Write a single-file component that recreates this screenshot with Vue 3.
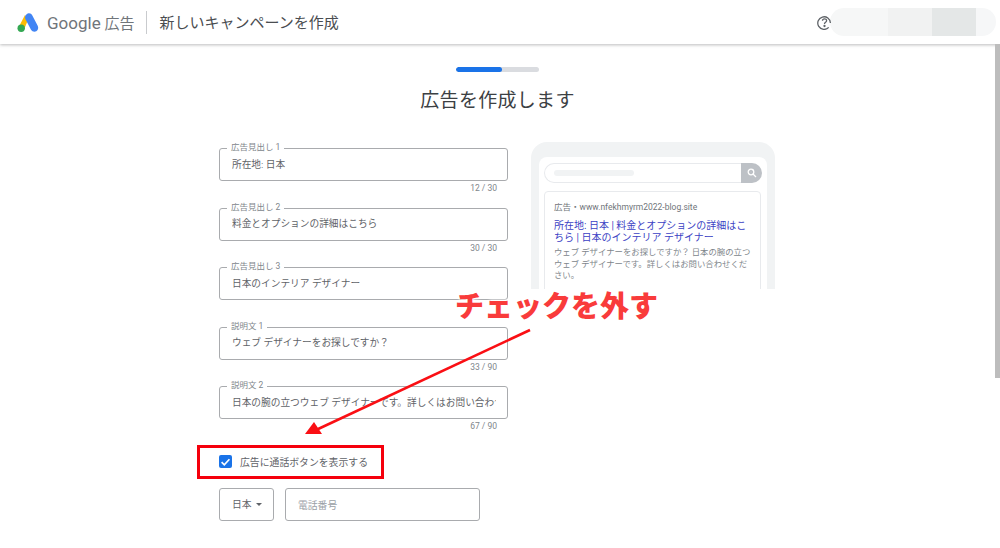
<script setup>
const fields = [
  { label: '広告見出し 1', value: '所在地: 日本', count: '12 / 30' },
  { label: '広告見出し 2', value: '料金とオプションの詳細はこちら', count: '30 / 30' },
  { label: '広告見出し 3', value: '日本のインテリア デザイナー', count: '' },
  { label: '説明文 1', value: 'ウェブ デザイナーをお探しですか？', count: '33 / 90' },
  { label: '説明文 2', value: '日本の腕の立つウェブ デザイナーです。詳しくはお問い合わせください。', count: '67 / 90' },
]
</script>

<template>
  <div class="page">
    <header class="header">
      <svg class="logo" width="22" height="21" viewBox="0 0 22 21">
        <path d="M8 3 L2.5 13.5 L7 17.5 L11 8 Z" fill="#fbbc04" />
        <path d="M11 1.5 C13 1 14.500 2 15.200 3.200 L20.700 13.800 C21.800 15.800 21 18.300 19.300 19.300 C17.500 20.300 15.100 19.700 14 17.800 L8.500 7.300 C7.400 5.100 8.600 2.200 11 1.500 Z" fill="#4285f4" />
        <circle cx="4.200" cy="16.200" r="3.700" fill="#34a853" />
      </svg>
      <span class="brand"><span class="google">Google</span> 広告</span>
      <span class="divider"></span>
      <span class="page-title">新しいキャンペーンを作成</span>
      <span class="spacer"></span>
      <svg class="help" width="15" height="15" viewBox="0 0 15 15" fill="none" stroke="#5f6368" stroke-width="1.300">
        <path d="M11.700 12.400 A6.300 6.300 0 1 1 13.400 8" />
        <path d="M5.500 5.800 C5.500 3.300 9.600 3.300 9.600 5.700 C9.600 7.300 7.500 7.300 7.500 9" />
        <circle cx="7.500" cy="11" r="0.500" fill="#5f6368" />
      </svg>
      <div class="account">
        <span class="seg seg-a"></span>
        <span class="seg seg-b"></span>
        <span class="seg seg-c"></span>
        <span class="seg seg-d"></span>
      </div>
    </header>

    <main class="main">
      <div class="progress"><div class="progress-fill"></div></div>
      <h1 class="title">広告を作成します</h1>

      <div class="columns">
        <div class="form">
          <div v-for="f in fields" :key="f.label" class="field-wrap">
            <div class="field">
              <span class="legend">{{ f.label }}</span>
              <span class="value">{{ f.value }}</span>
            </div>
            <div class="count">{{ f.count }}</div>
          </div>

          <label class="check-row">
            <span class="checkbox">
              <svg width="14" height="14" viewBox="0 0 14 14" fill="none" stroke="#fff" stroke-width="1.800">
                <path d="M2.800 7.200 L5.700 10 L11.200 4" />
              </svg>
            </span>
            <span class="check-label">広告に通話ボタンを表示する</span>
          </label>

          <div class="phone-row">
            <div class="select">日本<span class="caret"></span></div>
            <div class="phone-input">電話番号</div>
          </div>
        </div>

        <aside class="preview">
          <div class="screen">
            <div class="search">
              <span class="search-bar"><span class="search-placeholder"></span></span>
              <span class="search-btn">
                <svg width="10" height="10" viewBox="0 0 10 10" fill="none" stroke="#fff" stroke-width="1.300">
                  <circle cx="4" cy="4" r="2.800" />
                  <path d="M6 6 L9 9" />
                </svg>
              </span>
            </div>
            <div class="ad">
              <div class="ad-url">広告・www.nfekhmyrm2022-blog.site</div>
              <div class="ad-title">所在地: 日本 | 料金とオプションの詳細はこちら | 日本のインテリア デザイナー</div>
              <div class="ad-desc">ウェブ デザイナーをお探しですか？ 日本の腕の立つウェブ デザイナーです。詳しくはお問い合わせください。</div>
            </div>
          </div>
        </aside>
      </div>
    </main>

    <div class="scrollbar"></div>

    <div class="note">チェックを外す</div>
    <svg class="arrow" width="240" height="120" viewBox="0 0 240 120">
      <path d="M228 3 L14 103" stroke="#fa0f14" stroke-width="2.600" fill="none" />
      <path d="M3 107 L12 95 L20 107 Z" fill="#fa0f14" />
    </svg>
    <div class="highlight"></div>
  </div>
</template>

<style>
html, body { margin: 0; background: #fff; }
</style>

<style scoped>
.page {
  position: relative;
  width: 1000px;
  height: 548px;
  overflow: hidden;
  background: #fff;
  font-family: Roboto, "Noto Sans CJK JP", sans-serif;
  color: #5f6368;
}
.header {
  height: 44px;
  box-sizing: border-box;
  display: flex;
  align-items: center;
  padding: 0 4px 0 17px;
  background: #fff;
  box-shadow: 0 1px 3px rgba(60, 64, 67, 0.35);
}
.logo { flex: none; margin-right: 8px; }
.brand { font-size: 15px; color: #70757a; white-space: nowrap; }
.google { font-size: 17px; font-weight: 400; }
.divider { width: 1px; height: 23px; background: #c9cbce; margin: 0 12px; }
.page-title { font-size: 15px; color: #4a4d51; white-space: nowrap; position: relative; top: -1px; }
.spacer { flex: 1; }
.help { flex: none; margin-right: -2px; position: relative; z-index: 1; }
.account {
  display: flex;
  width: 166px;
  height: 28px;
  border-radius: 14px;
  overflow: hidden;
}
.seg-a { width: 58px; background: #f6f7f7; }
.seg-b { width: 44px; background: #f1f2f2; }
.seg-c { width: 44px; background: #e4e7e7; }
.seg-d { width: 20px; background: #f6f7f8; }

.main {
  width: 995px;
  display: flex;
  flex-direction: column;
  align-items: center;
  padding-top: 23px;
}
.progress { width: 83px; height: 5px; border-radius: 3px; background: #dadce0; overflow: hidden; }
.progress-fill { width: 46px; height: 5px; background: #1a73e8; border-radius: 3px; }
.title {
  margin: 17px 0 0;
  height: 24px;
  line-height: 24px;
  font-size: 19px;
  font-weight: 400;
  color: #3c4043;
  letter-spacing: 0.3px;
}
.columns {
  display: flex;
  align-items: flex-start;
  gap: 23px;
  margin-top: 29px;
  width: 557px;
}
.form { width: 289px; flex: none; padding-top: 6px; }
.field-wrap { height: 59.600px; }
.field {
  position: relative;
  box-sizing: border-box;
  height: 33px;
  border: 1px solid #a9abae;
  border-radius: 3px;
  padding: 0 11px 2px 12px;
  display: flex;
  align-items: center;
}
.legend {
  position: absolute;
  top: -7px;
  left: 7px;
  padding: 0 4px;
  background: #fff;
  font-size: 8.500px;
  line-height: 11px;
  color: #80868b;
}
.value {
  font-size: 9.700px;
  color: #5f6368;
  white-space: nowrap;
  overflow: hidden;
  width: 264px;
}
.count {
  height: 16px;
  line-height: 15px;
  text-align: right;
  padding-right: 11px;
  font-size: 8.500px;
  color: #80868b;
}
.check-row {
  display: flex;
  align-items: center;
  height: 14px;
  margin-top: 9px;
}
.checkbox {
  width: 13px;
  height: 13px;
  border-radius: 2px;
  background: #1a73e8;
  display: flex;
  align-items: center;
  justify-content: center;
  flex: none;
}
.check-label { margin-left: 8px; font-size: 9.850px; color: #5f6368; }
.phone-row { display: flex; gap: 11px; margin-top: 19px; }
.select, .phone-input {
  box-sizing: border-box;
  height: 33px;
  border: 1px solid #a9abae;
  border-radius: 3px;
  display: flex;
  align-items: center;
  font-size: 9.800px;
}
.select { width: 55px; padding-left: 12px; color: #5f6368; }
.caret {
  margin-left: 4px;
  width: 0;
  height: 0;
  border-left: 3.500px solid transparent;
  border-right: 3.500px solid transparent;
  border-top: 3.500px solid #5f6368;
}
.phone-input { width: 195px; padding: 2px 0 0 12px; color: #9aa0a6; }

.preview {
  width: 244px;
  height: 147px;
  flex: none;
  box-sizing: border-box;
  padding: 15px 8px 0;
  background: #f1f3f4;
  border-radius: 16px 16px 0 0;
  overflow: hidden;
}
.screen {
  height: 140px;
  box-sizing: border-box;
  background: #fff;
  border-radius: 8px 8px 0 0;
  padding: 6px 5px 0;
}
.search {
  display: flex;
  height: 20px;
  margin-bottom: 8px;
}
.search-bar {
  flex: 1;
  box-sizing: border-box;
  border: 1px solid #e8eaed;
  border-right: none;
  border-radius: 10px 0 0 10px;
  display: flex;
  align-items: center;
  padding-left: 9px;
}
.search-placeholder { width: 80px; height: 6px; background: #f1f3f4; border-radius: 3px; }
.search-btn {
  width: 21px;
  height: 20px;
  background: #bdc1c6;
  border-radius: 0 10px 10px 0;
  display: flex;
  align-items: center;
  justify-content: center;
}
.ad {
  width: 217px;
  height: 130px;
  box-sizing: border-box;
  border: 1px solid #e8eaed;
  border-radius: 4px;
  padding: 8px 5px 8px 9px;
}
.ad-url { font-size: 8.500px; line-height: 14px; color: #70757a; white-space: nowrap; }
.ad-title { width: 196px; font-size: 10px; line-height: 12px; color: #3b3fc4; margin-top: 6px; }
.ad-desc { width: 198px; font-size: 8.400px; line-height: 11.500px; color: #80868b; margin-top: 3px; }

.scrollbar {
  position: absolute;
  top: 44px;
  right: 0;
  width: 5px;
  height: 334px;
  background: #bdbdbd;
}
.note {
  position: absolute;
  left: 455px;
  top: 284px;
  font-family: "Noto Sans CJK JP", sans-serif;
  font-size: 29px;
  line-height: 40px;
  font-weight: 900;
  color: #f93b3b;
  white-space: nowrap;
  text-shadow: 0 0 3px #fff, 0 0 3px #fff, 0 0 3px #fff;
}
.arrow { position: absolute; left: 302px; top: 327px; }
.highlight {
  position: absolute;
  left: 197px;
  top: 445px;
  width: 187px;
  height: 34px;
  box-sizing: border-box;
  border: 3px solid #f5000c;
}
</style>
